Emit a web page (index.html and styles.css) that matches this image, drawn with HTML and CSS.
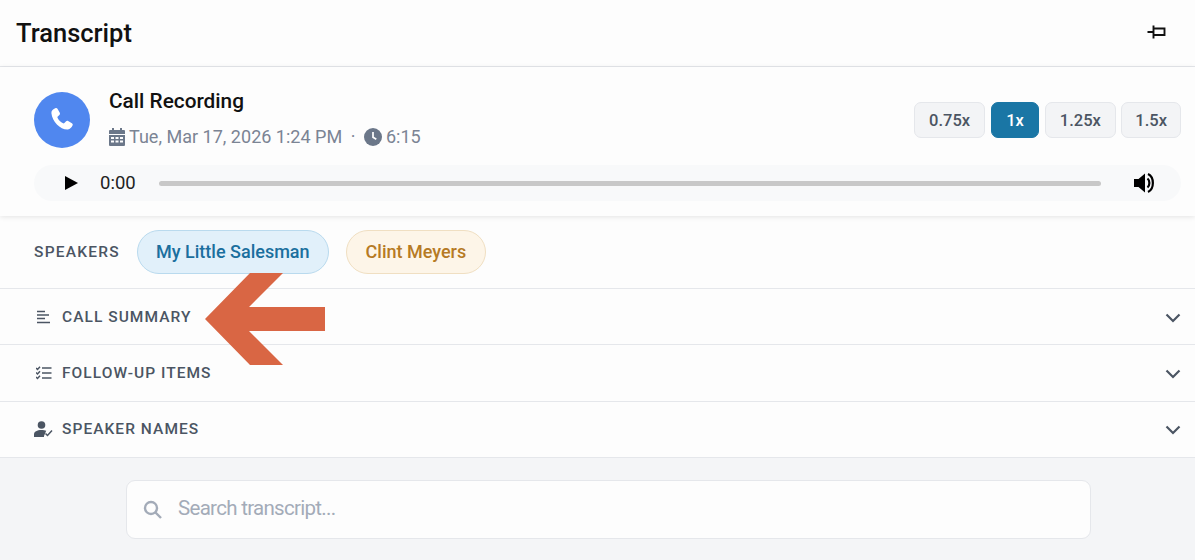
FILE: index.html
```html
<!DOCTYPE html>
<html lang="en">
<head>
    <meta charset="UTF-8">
    <title>Transcript</title>
    <link rel="stylesheet" href="styles.css">
</head>
<body>
    <div class="panel">
        <!-- Title bar -->
        <div class="title-bar">
            <h1>Transcript</h1>
            <svg class="pin-icon" width="20" height="16" viewBox="0 0 20 16" fill="none" stroke="#111" stroke-width="1.900">
                <path d="M0.500 8h6M6.500 1.500v13M6.500 4.500h11v6.500h-11"/>
            </svg>
        </div>

        <!-- Recording card -->
        <div class="recording">
            <div class="recording-top">
                <div class="call-badge">
                    <svg width="30" height="30" viewBox="0 0 24 24" fill="#fff">
                        <path d="M6.600 2.600c.7-.4 1.500-.2 1.900.5l1.700 3c.3.6.2 1.300-.3 1.800L8.600 9.100c-.3.3-.3.6-.2 1 .9 2 2.500 3.600 4.500 4.500.4.200.7.100 1-.200l1.200-1.300c.5-.5 1.200-.6 1.800-.3l3 1.700c.7.4.9 1.200.5 1.900-.8 1.500-1.900 3-3.700 3.100C10.700 19.800 4.200 13.300 3.500 6.300c-.1-1.800 1.600-2.900 3.100-3.700z"/>
                    </svg>
                </div>
                <div class="call-info">
                    <div class="call-name">Call Recording</div>
                    <div class="call-meta">
                        <svg class="meta-icon" width="16" height="18" viewBox="0 0 16 18" fill="#6b7789">
                            <path d="M3 0h2v2h6V0h2v2h2a1 1 0 0 1 1 1v3H0V3a1 1 0 0 1 1-1h2zM0 7h16v10a1 1 0 0 1-1 1H1a1 1 0 0 1-1-1zm2 2v2h3V9zm4.500 0v2h3V9zM11 9v2h3V9zm-9 3.500v2h3v-2zm4.500 0v2h3v-2zm4.500 0v2h3v-2z" fill-rule="evenodd"/>
                        </svg>
                        <span>Tue, Mar 17, 2026 1:24 PM</span>
                        <span class="meta-dot">·</span>
                        <svg class="meta-icon" width="18" height="18" viewBox="0 0 18 18">
                            <circle cx="9" cy="9" r="9" fill="#6b7789"/>
                            <path d="M9 4v5.300l3.300 2" fill="none" stroke="#fff" stroke-width="1.700"/>
                        </svg>
                        <span>6:15</span>
                    </div>
                </div>
                <div class="speed-buttons">
                    <button class="speed">0.75x</button>
                    <button class="speed active">1x</button>
                    <button class="speed">1.25x</button>
                    <button class="speed">1.5x</button>
                </div>
            </div>
            <div class="player">
                <svg width="14" height="16" viewBox="0 0 14 16" fill="#000"><path d="M1 1l13 7-13 7z"/></svg>
                <span class="player-time">0:00</span>
                <div class="player-track"></div>
                <svg class="volume" width="24" height="22" viewBox="0 0 24 22">
                    <path d="M1 7h4.500L12 1.500v19L5.500 15H1z" fill="#000"/>
                    <path d="M14.500 6.500c2.500 2 2.500 7 0 9" fill="none" stroke="#000" stroke-width="2.200"/>
                    <path d="M15 2c6.500 3 6.500 15 0 18" fill="none" stroke="#000" stroke-width="2.200"/>
                </svg>
            </div>
        </div>

        <!-- Speakers -->
        <div class="speakers">
            <span class="speakers-label">SPEAKERS</span>
            <span class="chip chip-blue">My Little Salesman</span>
            <span class="chip chip-amber">Clint Meyers</span>
        </div>

        <!-- Collapsed sections -->
        <div class="section-row">
            <svg class="row-icon" width="17" height="14" viewBox="0 0 17 14" stroke="#4b5563" stroke-width="1.500">
                <path d="M1 1.500h8M1 5h12M1 8.500h8M1 12.500h13"/>
            </svg>
            <span>CALL SUMMARY</span>
            <svg class="chevron" width="16" height="10" viewBox="0 0 16 10" fill="none" stroke="#4b5563" stroke-width="2.200"><path d="M1.500 1.500L8 8l6.500-6.500"/></svg>
        </div>
        <div class="section-row">
            <svg class="row-icon" width="17" height="14" viewBox="0 0 17 14" fill="none" stroke="#4b5563" stroke-width="1.500">
                <path d="M0 2l1.500 1.500L4 .8M0 6.500L1.500 8 4 5.300M0 11l1.500 1.500L4 9.800M6 2h9.500M6 7h9.500M6 12h9.500"/>
            </svg>
            <span>FOLLOW-UP ITEMS</span>
            <svg class="chevron" width="16" height="10" viewBox="0 0 16 10" fill="none" stroke="#4b5563" stroke-width="2.200"><path d="M1.500 1.500L8 8l6.500-6.500"/></svg>
        </div>
        <div class="section-row">
            <svg class="row-icon row-icon-wide" width="19" height="16" viewBox="0 0 19 16" fill="#4b5563">
                <circle cx="7.500" cy="4" r="3.800"/>
                <path d="M0 16v-2.500C0 10.500 3 9 7.500 9c1.800 0 3.500.3 4.700.8L10 15v1z"/>
                <path d="M11.500 12.500l2 2 4.500-5" fill="none" stroke="#4b5563" stroke-width="1.500"/>
            </svg>
            <span>SPEAKER NAMES</span>
            <svg class="chevron" width="16" height="10" viewBox="0 0 16 10" fill="none" stroke="#4b5563" stroke-width="2.200"><path d="M1.500 1.500L8 8l6.500-6.500"/></svg>
        </div>

        <!-- Search -->
        <div class="search-area">
            <div class="search-box">
                <svg width="19" height="19" viewBox="0 0 19 19" fill="none" stroke="#a3abb8" stroke-width="2.400">
                    <circle cx="8" cy="8" r="6"/>
                    <path d="M12.500 12.500L18 18"/>
                </svg>
                <span class="search-placeholder">Search transcript...</span>
            </div>
        </div>

        <!-- Annotation arrow drawn over the panel -->
        <svg class="arrow" width="120" height="92" viewBox="0 0 120 92">
            <path d="M0 46L45 0h33L44 34h76v24H44l34 34H45z" fill="#d96644"/>
        </svg>
    </div>
</body>
</html>
```

FILE: styles.css
```css
* {
    box-sizing: border-box;
    margin: 0;
    padding: 0;
}
body {
    font-family: Roboto, "Liberation Sans", sans-serif;
    background-color: #f4f5f7;
    overflow: hidden;
}
.panel {
    position: relative;
    width: 1195px;
    height: 560px;
    display: flex;
    flex-direction: column;
}
.title-bar {
    height: 67px;
    flex: none;
    display: flex;
    align-items: center;
    justify-content: space-between;
    padding: 0 28px 0 16px;
    background-color: #fdfdfd;
    border-bottom: 1px solid #e5e7eb;
}
h1 {
    font-size: 25.500px;
    font-weight: 500;
    color: #111;
}
.pin-icon {
    margin-bottom: 2px;
}
.recording {
    height: 149px;
    flex: none;
    padding: 24px 14px 0 34px;
    background-color: #fdfdfd;
    box-shadow: 0 1px 5px rgba(0, 0, 0, 0.1);
    position: relative;
}
.recording-top {
    display: flex;
    align-items: center;
    height: 58px;
}
.call-badge {
    width: 56px;
    height: 56px;
    flex: none;
    border-radius: 50%;
    background-color: #5087ef;
    display: flex;
    align-items: center;
    justify-content: center;
    margin-right: 19px;
}
.call-info {
    flex: 1;
    margin-top: -4px;
}
.call-name {
    font-size: 20.800px;
    font-weight: 500;
    color: #111;
    margin-bottom: 13px;
}
.call-meta {
    display: flex;
    align-items: center;
    font-size: 18.050px;
    color: #7b8494;
}
.meta-icon {
    margin-right: 4px;
}
.meta-dot {
    margin: 0 8.500px;
}
.speed-buttons {
    display: flex;
    gap: 5.500px;
}
.speed {
    height: 36px;
    padding: 0 14px;
    font-family: inherit;
    font-size: 16.500px;
    font-weight: 500;
    color: #4b5563;
    background-color: #f3f4f6;
    border: 1px solid #e5e7eb;
    border-radius: 7px;
}
.speed:last-child {
    padding: 0 13px;
}
.speed.active {
    color: #fff;
    background-color: #1a76a5;
    border-color: #1a76a5;
    padding: 0 14.500px;
}
.player {
    display: flex;
    align-items: center;
    height: 36px;
    margin-top: 16px;
    padding: 0 24px 0 30px;
    background-color: #f8f9fa;
    border-radius: 18px;
}
.player-time {
    font-size: 18.500px;
    color: #222;
    margin: 0 23px 0 22px;
}
.player-track {
    flex: 1;
    height: 5px;
    border-radius: 3px;
    background-color: #c8c8c8;
}
.volume {
    margin-left: 32px;
}
.speakers {
    height: 73px;
    flex: none;
    display: flex;
    align-items: center;
    padding: 0 0 1px 34px;
    background-color: #fdfdfd;
    border-bottom: 1px solid #e5e7eb;
}
.speakers-label {
    font-size: 15.500px;
    font-weight: 500;
    letter-spacing: 1.250px;
    color: #4b5563;
    margin-right: 16.500px;
}
.chip {
    height: 44px;
    display: flex;
    align-items: center;
    padding: 0 18.500px;
    border-radius: 22px;
    font-size: 18px;
    font-weight: 500;
    margin-right: 17px;
}
.chip-blue {
    color: #1a6f9e;
    background-color: #e1f0fa;
    border: 1px solid #b9daee;
}
.chip-amber {
    color: #b67a24;
    background-color: #fdf5e8;
    border: 1px solid #f0dfc2;
}
.section-row {
    height: 56.300px;
    flex: none;
    display: flex;
    align-items: center;
    padding: 0 14px 0 36px;
    background-color: #fdfdfd;
    border-bottom: 1px solid #e5e7eb;
    font-size: 15.500px;
    font-weight: 500;
    letter-spacing: 1.050px;
    color: #4b5563;
}
.row-icon {
    flex: none;
    margin-right: 9px;
}
.row-icon-wide {
    margin-left: -2px;
}
.chevron {
    margin-left: auto;
    margin-top: 2px;
}
.search-area {
    flex: 1;
    padding: 22px 0 0 126px;
}
.search-box {
    width: 965px;
    height: 59px;
    display: flex;
    align-items: center;
    padding-left: 16px;
    background-color: #fdfdfd;
    border: 1px solid #e5e7eb;
    border-radius: 9px;
}
.search-placeholder {
    margin-left: 16px;
    margin-bottom: 2px;
    font-size: 20.500px;
    letter-spacing: -0.700px;
    color: #a3abb8;
}
.arrow {
    position: absolute;
    left: 205px;
    top: 273px;
}
```
